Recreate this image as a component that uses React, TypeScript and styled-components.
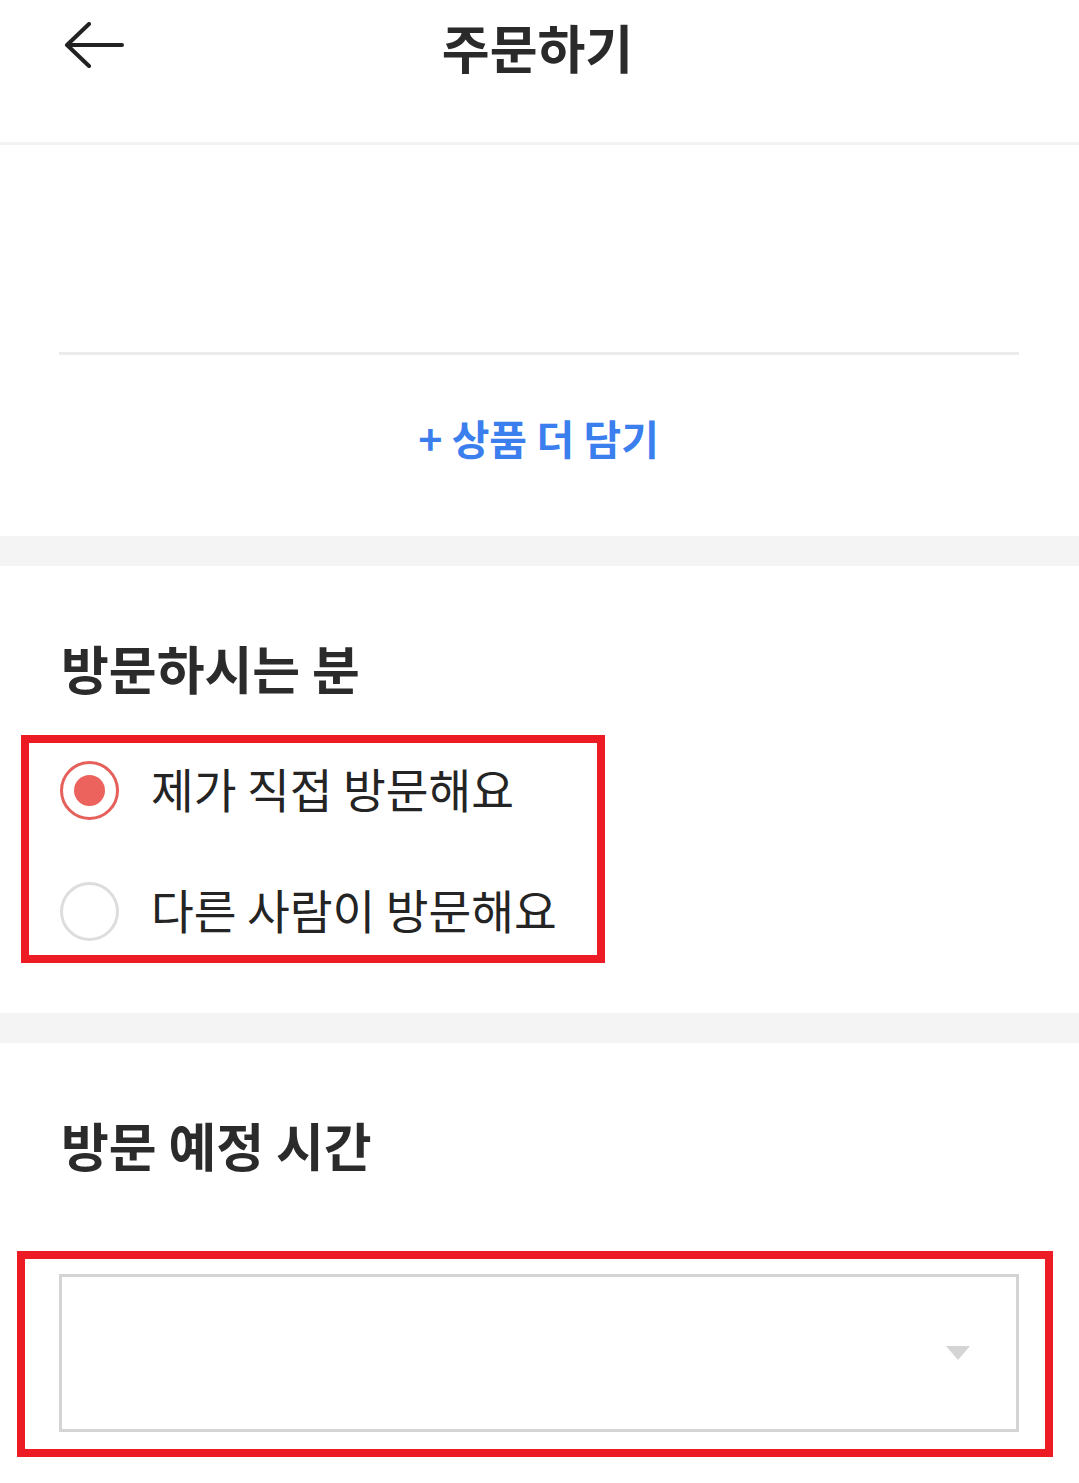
import styled, { createGlobalStyle } from "styled-components";

const GlobalStyle = createGlobalStyle`
  * {
    box-sizing: border-box;
  }
  body {
    margin: 0;
    background: #ffffff;
    font-family: "Noto Sans CJK KR", "Noto Sans", sans-serif;
    color: #262626;
  }
`;

const BackIcon = () => (
  <svg width="60" height="46" viewBox="0 0 60 46" fill="none">
    <path
      d="M58 23H3M25 2L3 23L25 44"
      stroke="#222222"
      strokeWidth="4"
      strokeLinecap="round"
      strokeLinejoin="round"
    />
  </svg>
);

const OPTIONS = ["제가 직접 방문해요", "다른 사람이 방문해요"];

const App = () => {
  return (
    <StPage>
      <GlobalStyle />
      <StHeader>
        <StBack type="button" aria-label="뒤로가기">
          <BackIcon />
        </StBack>
        <StTitle>주문하기</StTitle>
        <span />
      </StHeader>

      <StProductList />
      <StListLine />
      <StAddMore>
        <StAddButton type="button">+ 상품 더 담기</StAddButton>
      </StAddMore>

      <StBand />

      <StSection $gap={38} $bottom={50}>
        <StSectionTitle>방문하시는 분</StSectionTitle>
        <StRadioBox>
          {OPTIONS.map((label, i) => (
            <StRadioRow key={label}>
              <StRadio $checked={i === 0} />
              <StRadioLabel>{label}</StRadioLabel>
            </StRadioRow>
          ))}
        </StRadioBox>
      </StSection>

      <StBand />

      <StSection $gap={77} $bottom={26}>
        <StSectionTitle>방문 예정 시간</StSectionTitle>
        <StSelectBox>
          <StSelect>
            <StCaret />
          </StSelect>
        </StSelectBox>
      </StSection>
    </StPage>
  );
};

export default App;

const StPage = styled.div`
  width: 1079px;
  display: flex;
  flex-direction: column;
`;

const StHeader = styled.header`
  height: 145px;
  display: grid;
  grid-template-columns: 1fr auto 1fr;
  align-items: start;
  border-bottom: 3px solid #f3f3f3;
`;

const StBack = styled.button`
  justify-self: start;
  margin: 22px 0 0 64px;
  padding: 0;
  border: none;
  background: none;
  display: flex;
`;

const StTitle = styled.h1`
  margin: 18px 4px 0 0;
  font-size: 52px;
  line-height: 58px;
  font-weight: 700;
  color: #2a2a2a;
`;

const StProductList = styled.div`
  height: 207px;
`;

const StListLine = styled.div`
  height: 3px;
  margin: 0 60px 0 59px;
  background: #ececec;
`;

const StAddMore = styled.div`
  height: 181px;
  display: flex;
  justify-content: center;
  align-items: flex-start;
  padding-top: 58px;
`;

const StAddButton = styled.button`
  padding: 0;
  margin-right: 2px;
  border: none;
  background: none;
  font-family: "Noto Sans CJK KR", "Noto Sans", sans-serif;
  font-size: 41px;
  line-height: 48px;
  font-weight: 700;
  color: #3b7eee;
`;

const StBand = styled.div`
  height: 30px;
  background: #f4f4f4;
`;

const StSection = styled.section<{ $gap: number; $bottom: number }>`
  display: flex;
  flex-direction: column;
  align-items: flex-start;
  gap: ${({ $gap }) => $gap}px;
  padding: 72px 0 ${({ $bottom }) => $bottom}px 0;
`;

const StSectionTitle = styled.h2`
  margin: 0 0 0 61px;
  font-size: 52px;
  line-height: 59px;
  font-weight: 700;
  color: #2b2b2b;
`;

const StRadioBox = styled.div`
  width: 584px;
  margin-left: 21px;
  border: 8px solid #ed1c24;
  display: flex;
  flex-direction: column;
  gap: 61px;
  padding: 17px 0 14px 31px;
`;

const StRadioRow = styled.label`
  height: 60px;
  display: flex;
  align-items: center;
  gap: 32px;
`;

const StRadio = styled.span<{ $checked: boolean }>`
  width: 59px;
  height: 59px;
  flex-shrink: 0;
  border-radius: 50%;
  border: 3px solid ${({ $checked }) => ($checked ? "#e5605b" : "#dddddd")};
  display: flex;
  align-items: center;
  justify-content: center;

  &::after {
    content: "";
    width: 31px;
    height: 31px;
    border-radius: 50%;
    background: #ec635e;
    display: ${({ $checked }) => ($checked ? "block" : "none")};
  }
`;

const StRadioLabel = styled.span`
  margin-top: -4px;
  font-size: 46.5px;
  line-height: 54px;
  font-weight: 400;
  color: #242424;
`;

const StSelectBox = styled.div`
  width: 1036px;
  margin-left: 17px;
  border: 8px solid #ed1c24;
  padding: 15px 26px 17px 34px;
`;

const StSelect = styled.div`
  width: 960px;
  height: 158px;
  border: 3px solid #d4d4d4;
  display: flex;
  align-items: center;
  justify-content: flex-end;
  padding-right: 46px;
`;

const StCaret = styled.span`
  width: 0;
  height: 0;
  border-left: 12px solid transparent;
  border-right: 12px solid transparent;
  border-top: 14px solid #d4d4d4;
`;
